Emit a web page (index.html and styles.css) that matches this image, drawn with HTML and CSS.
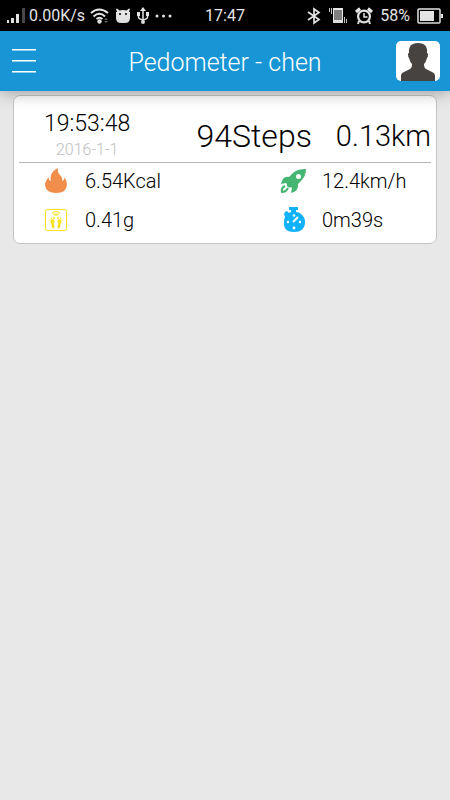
FILE: index.html
```html
<!DOCTYPE html>
<html lang="en">
<head>
<meta charset="utf-8">
<meta name="viewport" content="width=device-width, initial-scale=1">
<title>Pedometer - chen</title>
<link rel="stylesheet" href="styles.css">
</head>
<body>
<div class="status">
  <div class="status-group status-left">
    <svg width="20" height="18" viewBox="0 0 20 18" fill="#e6e6e6" aria-hidden="true"><path d="M0 13h2v3H0zM4 11h3v5H4zM9 7h3v9H9z"/><path fill="#484848" d="M15 1h3v15h-3z"/></svg>
    <span class="rate">0.00K/s</span>
    <svg width="20" height="18" viewBox="0 0 20 18" fill="none" stroke="#e6e6e6" stroke-width="2" aria-hidden="true"><path d="M1 6Q9 -1 18 6M3.500 9.500Q9.500 4 15 9.500M6.500 12Q9.500 9.500 12.500 12"/><circle cx="9.500" cy="14.500" r="2.200" fill="#e6e6e6" stroke="none"/><path stroke="none" fill="#666" d="M14 13l2-2 2 2zM14 14l2 2 2-2z"/></svg>
    <svg width="16" height="16" viewBox="0 0 16 16" aria-hidden="true"><path fill="#e6e6e6" d="M1 1l1-.5 2.500 2q3.500-1 7 0l2.500-2L15 1l-1 3h1v6q0 5-5 5H6q-5 0-5-5V4h1z"/><circle cx="5" cy="6" r="1" fill="#000"/><circle cx="11" cy="6" r="1" fill="#000"/></svg>
    <svg width="14" height="18" viewBox="0 0 14 18" fill="none" stroke="#e6e6e6" stroke-width="1.500" aria-hidden="true"><path d="M7 3v12M2.500 7v3q0 2 4.500 3M11.500 7v3q0 2-4.500 3"/><path fill="#e6e6e6" stroke="none" d="M7 0l3 4H4zM1 5h3v4H1zM10 5h3v4h-3z"/><circle cx="7" cy="15" r="2" fill="#e6e6e6" stroke="none"/></svg>
    <svg width="18" height="4" viewBox="0 0 18 4" fill="#e6e6e6" aria-hidden="true"><circle cx="2" cy="2" r="1.500"/><circle cx="8.500" cy="2" r="1.500"/><circle cx="15" cy="2" r="1.500"/></svg>
  </div>
  <time class="clock">17:47</time>
  <div class="status-group status-right">
    <svg width="14" height="18" viewBox="0 0 14 18" fill="none" stroke="#e6e6e6" stroke-width="1.700" aria-hidden="true"><path d="M1 5l11 7.500-5 3.500V2l5 3.500L1 13"/></svg>
    <svg width="20" height="18" viewBox="0 0 20 18" aria-hidden="true"><path fill="#e6e6e6" d="M5 1h10v15H5z"/><path fill="#808080" d="M6 3h8v10H6z"/><path d="M1.500 1v4M3.500 1v6M16.500 10v6M18.500 12v4" stroke="#c8c8c8"/></svg>
    <svg width="18" height="18" viewBox="0 0 18 18" aria-hidden="true"><circle cx="9" cy="9.500" r="7" fill="#e6e6e6"/><circle cx="9" cy="9.500" r="4.800" fill="#000"/><path d="M9 6v4h3.500" fill="none" stroke="#e6e6e6" stroke-width="1.500"/><path stroke="#e6e6e6" stroke-width="3" d="M1 5l4-3.500M17 5l-4-3.500"/><path stroke="#e6e6e6" stroke-width="2" d="M4 14l-1 3M14 14l1 3"/></svg>
    <span class="charge">58%</span>
    <svg width="26" height="16" viewBox="0 0 26 16" aria-hidden="true"><rect x="1" y="1" width="22" height="14" rx="1" fill="none" stroke="#e6e6e6" stroke-width="1.500"/><path fill="#e6e6e6" d="M3 3h14v10H3zM24 6h2v4h-2z"/></svg>
  </div>
</div>

<header class="bar">
  <button class="menu" type="button" aria-label="Menu"><span></span><span></span><span></span></button>
  <h1>Pedometer - chen</h1>
  <button class="avatar" type="button" aria-label="Profile">
    <svg width="44" height="40" viewBox="0 0 44 40" aria-hidden="true"><path fill="#474341" d="M5 40v-5q0-3 3-4l6-3q2-1 2-5-2-2-3-6-1-1-1-4 0-1 1-1-1-10 9-10t9 10q1 0 1 1 0 3-1 4-1 4-3 6 0 4 2 5l6 3q3 1 3 4v5z"/></svg>
  </button>
</header>

<main class="list">
  <article class="card">
    <div class="summary">
      <div class="when"><time class="hour">19:53:48</time><time class="date">2016-1-1</time></div>
      <div class="totals"><span class="steps">94Steps</span><span class="distance">0.13km</span></div>
    </div>
    <ul class="stats">
      <li>
        <svg width="26" height="26" viewBox="0 0 26 26" aria-hidden="true"><path fill="#f28e4b" d="M15 0Q10 2 8 7q-1 3 0 6-3-1-2-4-4 4-4 8 1 8 11 8 11 0 11-9 0-4-3-7 1 3-2 4 1-3-2-6-3-3-2-7z"/></svg>
        <span>6.54Kcal</span>
      </li>
      <li>
        <svg width="26" height="26" viewBox="0 0 26 26" fill="#45b572" aria-hidden="true"><path fill-rule="evenodd" d="M26 1q-9 0-13 4L9 9q-5-1-7 4l-1 3 5-1 1 1q-1 2 1 3t3 0l1 1-1 5q8-2 7-9l3-3q5-5 5-12zM18.500 6a2.500 2.500 0 1 1 0 5 2.500 2.500 0 0 1 0-5z"/><path d="M5 18q-4 2-3 6 4 0 6-4" fill="none" stroke="#45b572" stroke-width="2"/></svg>
        <span>12.4km/h</span>
      </li>
      <li>
        <svg width="26" height="26" viewBox="0 0 26 26" fill="#f8e11d" aria-hidden="true"><rect x="2.500" y="2.500" width="21" height="21" rx="2" fill="none" stroke="#f8e11d"/><path fill="none" stroke="#f8e11d" d="M10 5q3-1 6 0 1 1-1 3h-4q-2-2-1-3zM13 8V6"/><path d="M10.500 12.500q-3-1-3 3l1 2q0 4 2 4 2-1 0-5 2-3 0-4zM15.500 12.500q3-1 3 3l-1 2q0 4-2 4-2-1 0-5-2-3 0-4z"/><circle cx="7" cy="13" r=".7"/><circle cx="8.500" cy="11.500" r=".7"/><circle cx="11" cy="11" r="1"/><circle cx="19" cy="13" r=".7"/><circle cx="17.500" cy="11.500" r=".7"/><circle cx="15" cy="11" r="1"/></svg>
        <span>0.41g</span>
      </li>
      <li>
        <svg width="26" height="26" viewBox="0 0 26 26" aria-hidden="true"><path fill="#11b2fc" d="M9 0h9v3h-2v2q3 0 5 2 4 3 4 8 0 10-11 10T4 15q0-3 1-5L4 7l1-2 2-1 2 2 2-1V3H9z"/><path d="M13 15l5-5" stroke="#fff" stroke-width="2"/><g fill="#fff"><circle cx="14" cy="8.500" r="1.200"/><circle cx="8" cy="15" r="1.200"/><circle cx="20" cy="15" r="1.200"/><circle cx="14" cy="21" r="1.400"/></g></svg>
        <span>0m39s</span>
      </li>
    </ul>
  </article>
</main>
</body>
</html>
```
FILE: styles.css
```css
* {
  box-sizing: border-box;
}

body {
  margin: 0;
  min-height: 100vh;
  background: #e8e8e8;
  color: #000;
  font-family: Roboto, "Liberation Sans", sans-serif;
  font-weight: 300;
}

svg {
  display: block;
  flex: none;
}

button {
  padding: 0;
  border: 0;
  background: none;
}

.status {
  display: grid;
  grid-template-columns: 1fr auto 1fr;
  align-items: center;
  padding: 0 7px;
  background: #000;
  color: #e6e6e6;
  font-size: 16px;
  line-height: 31px;
  font-weight: 400;
}

.status-group {
  display: flex;
  align-items: center;
  gap: 5px;
}

.status-left .rate {
  margin-left: -3px;
}

.status-right {
  justify-content: flex-end;
  gap: 7px;
}

.bar {
  position: relative;
  display: flex;
  align-items: center;
  justify-content: space-between;
  height: 60px;
  padding: 0 10px 0 12px;
  background: #1795d4;
  box-shadow: 0 1px 16px rgba(0, 0, 0, 0.35);
}

.menu {
  display: flex;
  flex-direction: column;
  gap: 9px;
  width: 42px;
}

.menu span {
  width: 24px;
  height: 2px;
  border-bottom: 1px solid #8fcdec;
  background: #fff;
}

.bar h1 {
  margin: 0;
  padding-top: 4px;
  color: #fff;
  font-size: 25px;
  line-height: 32px;
  font-weight: 300;
}

.avatar {
  overflow: hidden;
  border-radius: 5px;
  background: #fff;
}

.list {
  padding: 4px 13px;
}

.card {
  padding: 0 5px 5px;
  border: 1px solid #c4c4c4;
  border-radius: 7px;
  background: #fff;
}

.summary {
  display: flex;
  justify-content: space-between;
  padding: 14px 0 0 25px;
  border-bottom: 1px solid #b5b5b5;
}

.when {
  display: flex;
  flex-direction: column;
  align-items: center;
}

.hour {
  font-size: 23px;
  line-height: 28px;
}

.date {
  color: #c0c0c0;
  font-size: 16px;
  line-height: 24px;
}

.totals {
  display: flex;
  align-items: center;
  gap: 24px;
  line-height: 52px;
}

.steps {
  font-size: 32px;
}

.distance {
  font-size: 29px;
}

.stats {
  display: grid;
  grid-template-columns: 237px 1fr;
  row-gap: 3px;
  margin: 0;
  padding: 0 0 0 24px;
  list-style: none;
}

.stats li {
  display: flex;
  align-items: center;
  gap: 16px;
  height: 36px;
  font-size: 20px;
}
```
